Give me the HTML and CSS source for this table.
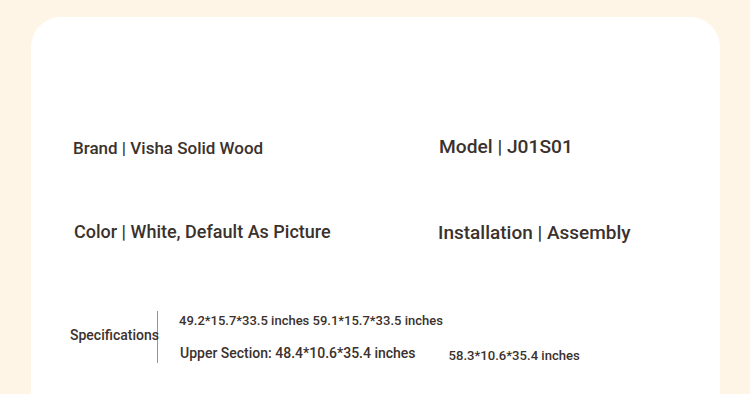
FILE: index.html
```html
<!DOCTYPE html>
<html>
<head>
<meta charset="utf-8">
<link rel="stylesheet" href="styles.css">
</head>
<body>
<div class="card">
  <div class="attrs">
    <div class="attr a-brand">Brand | Visha Solid Wood</div>
    <div class="attr a-model">Model | J01S01</div>
    <div class="attr a-color">Color | White, Default As Picture</div>
    <div class="attr a-install">Installation | Assembly</div>
  </div>
  <div class="specs">
    <div class="spec-label"><span>Specifications</span></div>
    <div class="spec-values">
      <div class="spec-line1">49.2*15.7*33.5 inches 59.1*15.7*33.5 inches</div>
      <div class="spec-line2">
        <span class="upper">Upper Section: 48.4*10.6*35.4 inches</span>
        <span class="alt">58.3*10.6*35.4 inches</span>
      </div>
    </div>
  </div>
</div>
</body>
</html>
```

FILE: styles.css
```css
html, body {
  margin: 0;
  padding: 0;
  background: #fef5e7;
  width: 750px;
  height: 394px;
  overflow: hidden;
  font-family: Roboto, "Noto Sans", sans-serif;
  color: #3b312d;
}
.card {
  margin: 17px 30px 0 31px;
  height: 377px;
  background: #ffffff;
  border-radius: 30px 30px 0 0;
  padding: 0 0 0 42px;
  box-sizing: border-box;
}
.attrs {
  padding-top: 103px;
  display: grid;
  grid-template-columns: 366px auto;
  grid-template-rows: 56px 56px;
  row-gap: 28px;
  align-items: center;
}
.attr {
  font-weight: 500;
  font-size: 17px;
}
.a-brand { font-size: 17px; }
.a-model { font-size: 19.2px; margin-top: -3px; }
.a-color { font-size: 18px; margin-left: 1px; margin-top: -2px; }
.a-install { font-size: 19px; margin-left: -1px; }
.specs {
  margin-top: 51px;
  display: flex;
  align-items: flex-start;
  margin-left: -3px;
}
.spec-label {
  font-size: 14px;
  font-weight: 500;
  width: 88px;
  display: flex;
  align-items: center;
  border-right: 1px solid #9a9490;
  height: 52px;
  box-sizing: border-box;
}
.spec-label span {
  margin-top: -5px;
  white-space: nowrap;
}
.spec-values {
  padding-left: 21px;
  font-size: 13px;
  font-weight: 500;
}
.spec-line1 {
  margin-top: 2px;
}
.spec-line2 {
  margin-top: 17px;
  display: flex;
  align-items: baseline;
}
.upper {
  font-size: 14px;
  margin-left: 1px;
}
.alt {
  font-size: 13.1px;
  margin-left: 33px;
  position: relative;
  top: 2px;
}
```
